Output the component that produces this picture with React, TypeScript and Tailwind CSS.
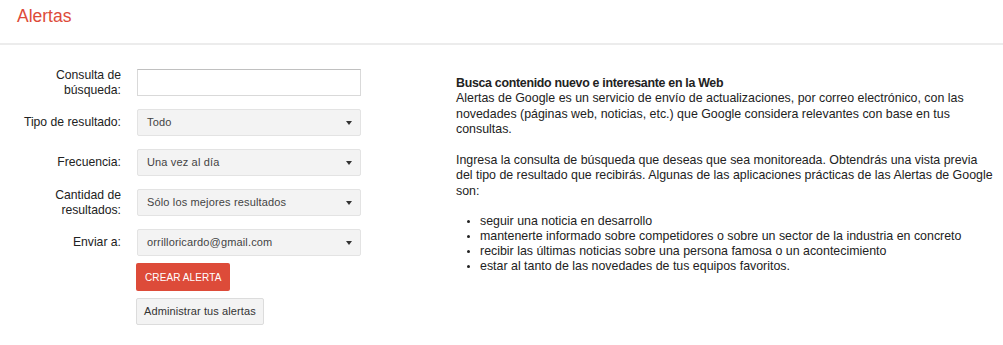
import React from 'react';

const labelCls = 'w-[106px] shrink-0 text-right text-[12.2px] leading-[15px] text-[#222]';

const Select: React.FC<{ value: string }> = ({ value }) => (
  <div className="flex h-[27px] w-[224px] items-center justify-between rounded-[2px] border border-[#e3e3e3] bg-[#f3f3f3] pl-[9px] pr-[8px]">
    <span className="text-[11px] tracking-[0.15px] text-[#444]">{value}</span>
    <span className="h-0 w-0 border-x-[3.5px] border-t-[4px] border-x-transparent border-t-[#333]" />
  </div>
);

const Row: React.FC<{ label: React.ReactNode; children: React.ReactNode }> = ({ label, children }) => (
  <div className="flex h-[27px] items-center gap-[16px]">
    <div className={labelCls}>{label}</div>
    {children}
  </div>
);

const App: React.FC = () => {
  return (
    <div className="h-[345px] w-[1003px] bg-white font-['Liberation_Sans',Arial,sans-serif] text-[#222]">
      {/* header */}
      <div className="flex h-[45px] items-center border-b-2 border-[#ececec] pl-[17px] pb-[11px]">
        <h1 className="text-[17.5px] text-[#dd4b39]">Alertas</h1>
      </div>

      <div className="flex pt-[24px]">
        {/* form */}
        <div className="flex w-[456px] shrink-0 flex-col gap-[13px] pl-[15px]">
          <Row
            label={
              <>
                Consulta de
                <br />
                búsqueda:
              </>
            }
          >
            <input
              type="text"
              className="h-[27px] w-[224px] border border-[#d9d9d9] border-t-[#c0c0c0] bg-white px-2 text-[13px] outline-none"
            />
          </Row>
          <Row label="Tipo de resultado:">
            <Select value="Todo" />
          </Row>
          <Row label="Frecuencia:">
            <Select value="Una vez al día" />
          </Row>
          <Row
            label={
              <>
                Cantidad de
                <br />
                resultados:
              </>
            }
          >
            <Select value="Sólo los mejores resultados" />
          </Row>
          <Row label="Enviar a:">
            <Select value="orrilloricardo@gmail.com" />
          </Row>
          <div className="-mt-[6px] ml-[121px] flex flex-col items-start gap-[7px]">
            <button className="h-[28px] rounded-[2px] bg-[#dd4b39] px-[9px] text-[10px] tracking-[0.1px] text-white">
              CREAR ALERTA
            </button>
            <button className="h-[27px] rounded-[2px] border border-[#dcdcdc] bg-[#f3f3f3] px-[7px] text-[11px] tracking-[0.1px] text-[#333]">
              Administrar tus alertas
            </button>
          </div>
        </div>

        {/* description */}
        <div className="w-[539px] pt-[6px] text-[12.4px] text-[#222]">
          <h2 className="font-bold leading-[16px] tracking-[-0.3px]">Busca contenido nuevo e interesante en la Web</h2>
          <p className="leading-[15.6px]">
            Alertas de Google es un servicio de envío de actualizaciones, por correo electrónico, con las novedades
            (páginas web, noticias, etc.) que Google considera relevantes con base en tus consultas.
          </p>
          <p className="mt-[15px] leading-[15.6px]">
            Ingresa la consulta de búsqueda que deseas que sea monitoreada. Obtendrás una vista previa del tipo de
            resultado que recibirás. Algunas de las aplicaciones prácticas de las Alertas de Google son:
          </p>
          <ul className="mt-[14px] list-disc pl-[24px] leading-[15px] marker:text-[10px]">
            <li>seguir una noticia en desarrollo</li>
            <li>mantenerte informado sobre competidores o sobre un sector de la industria en concreto</li>
            <li>recibir las últimas noticias sobre una persona famosa o un acontecimiento</li>
            <li>estar al tanto de las novedades de tus equipos favoritos.</li>
          </ul>
        </div>
      </div>
    </div>
  );
};

export default App;
